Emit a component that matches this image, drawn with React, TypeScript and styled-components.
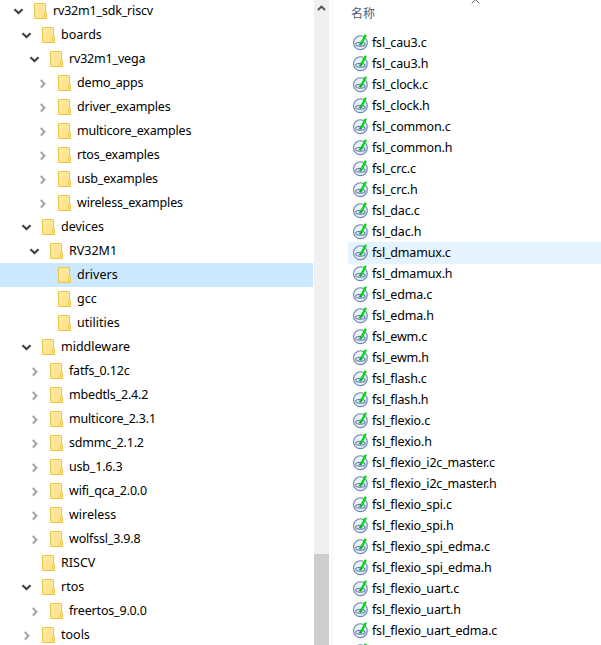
import React from "react";
import styled, { createGlobalStyle } from "styled-components";

const Global = createGlobalStyle`
  html, body { margin: 0; padding: 0; overflow: hidden; background: #fff; }
`;

const Explorer = styled.div`
  display: flex;
  width: 601px;
  height: 645px;
  overflow: hidden;
  background: #fff;
  color: #000;
  font-family: "Noto Sans", "Noto Sans CJK SC", sans-serif;
  font-size: 12.5px;
`;

const Tree = styled.div`
  width: 313px;
  flex: none;
  overflow: hidden;
`;

const TreeList = styled.div`
  margin-top: -1px;
`;

const TreeRow = styled.div<{ $depth: number; $selected: boolean }>`
  display: flex;
  align-items: center;
  box-sizing: border-box;
  height: 24px;
  padding-left: ${(p) => 13 + p.$depth * 8}px;
  background: ${(p) => (p.$selected ? "#cce8ff" : "transparent")};
`;

const Toggle = styled.span`
  display: flex;
  width: 11px;
  height: 11px;
  margin-right: 10px;
`;

const Label = styled.span<{ $gap: number; $tight: boolean }>`
  margin-left: ${(p) => p.$gap}px;
  line-height: 20px;
  white-space: nowrap;
  letter-spacing: ${(p) => (p.$tight ? "-0.18px" : "0")};
`;

const Scrollbar = styled.div`
  display: flex;
  flex-direction: column;
  align-items: center;
  width: 15px;
  margin-left: 1px;
  flex: none;
  background: #f0f0f0;
`;

const ScrollArrow = styled.div`
  display: flex;
  justify-content: center;
  width: 15px;
  height: 554px;
  padding-top: 4px;
  box-sizing: border-box;
`;

const Thumb = styled.div`
  width: 15px;
  flex: 1;
  background: #cdcdcd;
`;

const Files = styled.div`
  flex: 1;
  min-width: 0;
  margin-left: 3px;
  border-left: 1px solid #f5f5f5;
  overflow: hidden;
`;

const Header = styled.div`
  display: flex;
  box-sizing: border-box;
  height: 32px;
  padding: 3px 0 0 18px;
  color: #4c607a;
  font-family: "Noto Sans CJK SC", sans-serif;
  font-size: 12px;
  line-height: 19px;
`;

const SortMark = styled.span`
  display: flex;
  margin: -4px 0 0 96px;
`;

const FileRow = styled.div<{ $hover: boolean }>`
  display: flex;
  align-items: center;
  height: 22px;
  margin: 0 0 -1px 15px;
  padding-left: 4px;
  background: ${(p) => (p.$hover ? "#e5f3ff" : "transparent")};
`;

const ChevronDown = () => (
  <svg width="11" height="11" viewBox="0 0 11 11">
    <path d="M1.4 3.2 5.5 7 9.6 3.2" fill="none" stroke="#404040" strokeWidth="2.1" />
  </svg>
);

const ChevronRight = () => (
  <svg width="11" height="11" viewBox="0 0 11 11">
    <path d="M3.8 1.9 7.4 5.7 3.8 9.5" fill="none" stroke="#a6a6a6" strokeWidth="2.1" />
  </svg>
);

const Folder = () => (
  <svg width="13" height="16" viewBox="0 0 13 16">
    <defs>
      <linearGradient id="folder" x1="0" y1="0" x2="1" y2="1">
        <stop offset="0" stopColor="#ffeba6" />
        <stop offset="1" stopColor="#ffe084" />
      </linearGradient>
    </defs>
    <path d="M.5.5h11v9h1v6H.5z" fill="url(#folder)" stroke="#e9c64b" />
    <path d="M10.5 15.5v-5l1-1 1 1v5z" fill="#ffe591" stroke="#e9c64b" strokeWidth=".9" />
  </svg>
);

const SourceIcon = () => (
  <svg width="17" height="18" viewBox="0 0 17 18">
    <defs>
      <linearGradient id="disc" x1="0" y1="0" x2="1" y2="1">
        <stop offset="0" stopColor="#dce8f7" />
        <stop offset=".5" stopColor="#f4f9ff" />
        <stop offset="1" stopColor="#c4daf2" />
      </linearGradient>
    </defs>
    <circle cx="8.4" cy="8.7" r="6.9" fill="url(#disc)" stroke="#7085ad" strokeWidth="1.1" />
    <ellipse cx="8.3" cy="10.3" rx="4.7" ry="1.9" fill="#eef5fd" stroke="#6580aa" strokeWidth="1.2" />
    <ellipse cx="8.3" cy="10.3" rx="1.7" ry=".8" fill="#426591" />
    <path d="M13.9.7 9.2 9.6" stroke="#00dc14" strokeWidth="2.4" />
    <path d="M9.4 9 8.3 11.4" stroke="#12a333" strokeWidth="1.7" />
  </svg>
);

type Node = [depth: number, name: string, state: "open" | "closed" | "leaf"];

const nodes: Node[] = [
  [0, "rv32m1_sdk_riscv", "open"],
  [1, "boards", "open"],
  [2, "rv32m1_vega", "open"],
  [3, "demo_apps", "closed"],
  [3, "driver_examples", "closed"],
  [3, "multicore_examples", "closed"],
  [3, "rtos_examples", "closed"],
  [3, "usb_examples", "closed"],
  [3, "wireless_examples", "closed"],
  [1, "devices", "open"],
  [2, "RV32M1", "open"],
  [3, "drivers", "leaf"],
  [3, "gcc", "leaf"],
  [3, "utilities", "leaf"],
  [1, "middleware", "open"],
  [2, "fatfs_0.12c", "closed"],
  [2, "mbedtls_2.4.2", "closed"],
  [2, "multicore_2.3.1", "closed"],
  [2, "sdmmc_2.1.2", "closed"],
  [2, "usb_1.6.3", "closed"],
  [2, "wifi_qca_2.0.0", "closed"],
  [2, "wireless", "closed"],
  [2, "wolfssl_3.9.8", "closed"],
  [1, "RISCV", "leaf"],
  [1, "rtos", "open"],
  [2, "freertos_9.0.0", "closed"],
  [1, "tools", "closed"],
];

const modules = [
  "cau3", "clock", "common", "crc", "dac", "dmamux", "edma", "ewm", "flash",
  "flexio", "flexio_i2c_master", "flexio_spi", "flexio_spi_edma", "flexio_uart",
];
const files = [
  ...modules.flatMap((m) => [`fsl_${m}.c`, `fsl_${m}.h`]),
  "fsl_flexio_uart_edma.c",
];

export default function App() {
  return (
    <>
      <Global />
      <Explorer>
        <Tree>
          <TreeList>
            {nodes.map(([depth, name, state]) => (
              <TreeRow key={name} $depth={depth} $selected={name === "drivers"}>
                <Toggle>
                  {state === "open" && <ChevronDown />}
                  {state === "closed" && <ChevronRight />}
                </Toggle>
                <Folder />
                <Label $gap={6} $tight={name.includes("_")}>{name}</Label>
              </TreeRow>
            ))}
          </TreeList>
        </Tree>
        <Scrollbar>
          <ScrollArrow>
            <svg width="9" height="8" viewBox="0 0 9 8">
              <path d="M1 6 4.5 2.5 8 6" fill="none" stroke="#505050" strokeWidth="1.9" />
            </svg>
          </ScrollArrow>
          <Thumb />
        </Scrollbar>
        <Files>
          <Header>
            名称
            <SortMark>
              <svg width="9" height="5" viewBox="0 0 9 5">
                <path d="M.7 4.3 4.5.7 8.3 4.3" fill="none" stroke="#666" />
              </svg>
            </SortMark>
          </Header>
          {files.map((name) => (
            <FileRow key={name} $hover={name === "fsl_dmamux.c"}>
              <SourceIcon />
              <Label $gap={3} $tight>{name}</Label>
            </FileRow>
          ))}
          <FileRow $hover={false}>
            <SourceIcon />
          </FileRow>
        </Files>
      </Explorer>
    </>
  );
}
